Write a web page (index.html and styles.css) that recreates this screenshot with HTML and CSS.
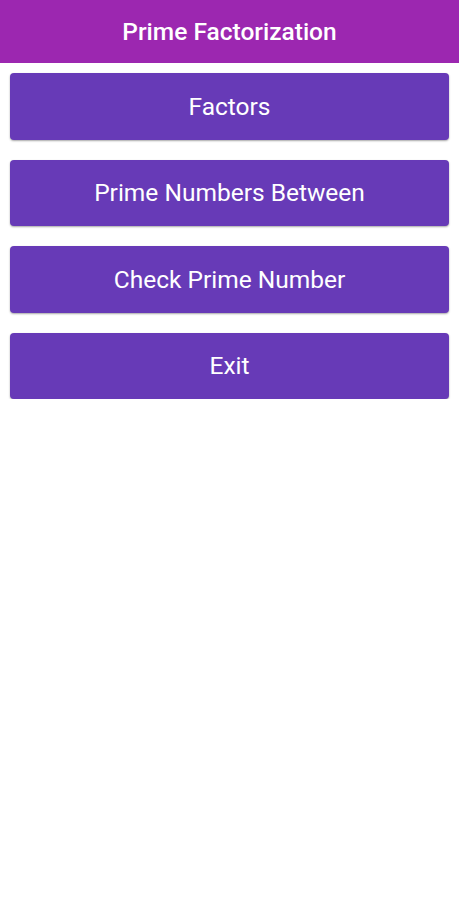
FILE: index.html
```html
<!DOCTYPE html>
<html>
<head lang="en">
    <meta charset="UTF-8">
    <title>Prime Factorization</title>
    <link rel="stylesheet" href="styles.css">
</head>
<body>
<div id="header">Prime Factorization</div>
<div id="menu">
    <div class="btn">Factors</div>
    <div class="btn">Prime Numbers Between</div>
    <div class="btn">Check Prime Number</div>
    <div class="btn">Exit</div>
</div>
</body>
</html>
```

FILE: styles.css
```css
*{
    margin: 0;
    padding: 0;
}
body{
    background: #fff;
    font-family: Roboto, "Liberation Sans", sans-serif;
}
#header{
    height: 63px;
    background: #9c27b0;
    color: #fff;
    font-size: 24.5px;
    font-weight: 500;
    line-height: 64px;
    text-align: center;
}
#menu{
    display: flex;
    flex-direction: column;
    gap: 20px;
    padding: 10px 10px 0;
}
.btn{
    height: 66.5px;
    background: #673ab7;
    color: #fff;
    font-size: 24.5px;
    border-radius: 4px;
    box-shadow: 0 1px 2px rgba(0,0,0,0.35);
    display: flex;
    align-items: center;
    justify-content: center;
}
```
